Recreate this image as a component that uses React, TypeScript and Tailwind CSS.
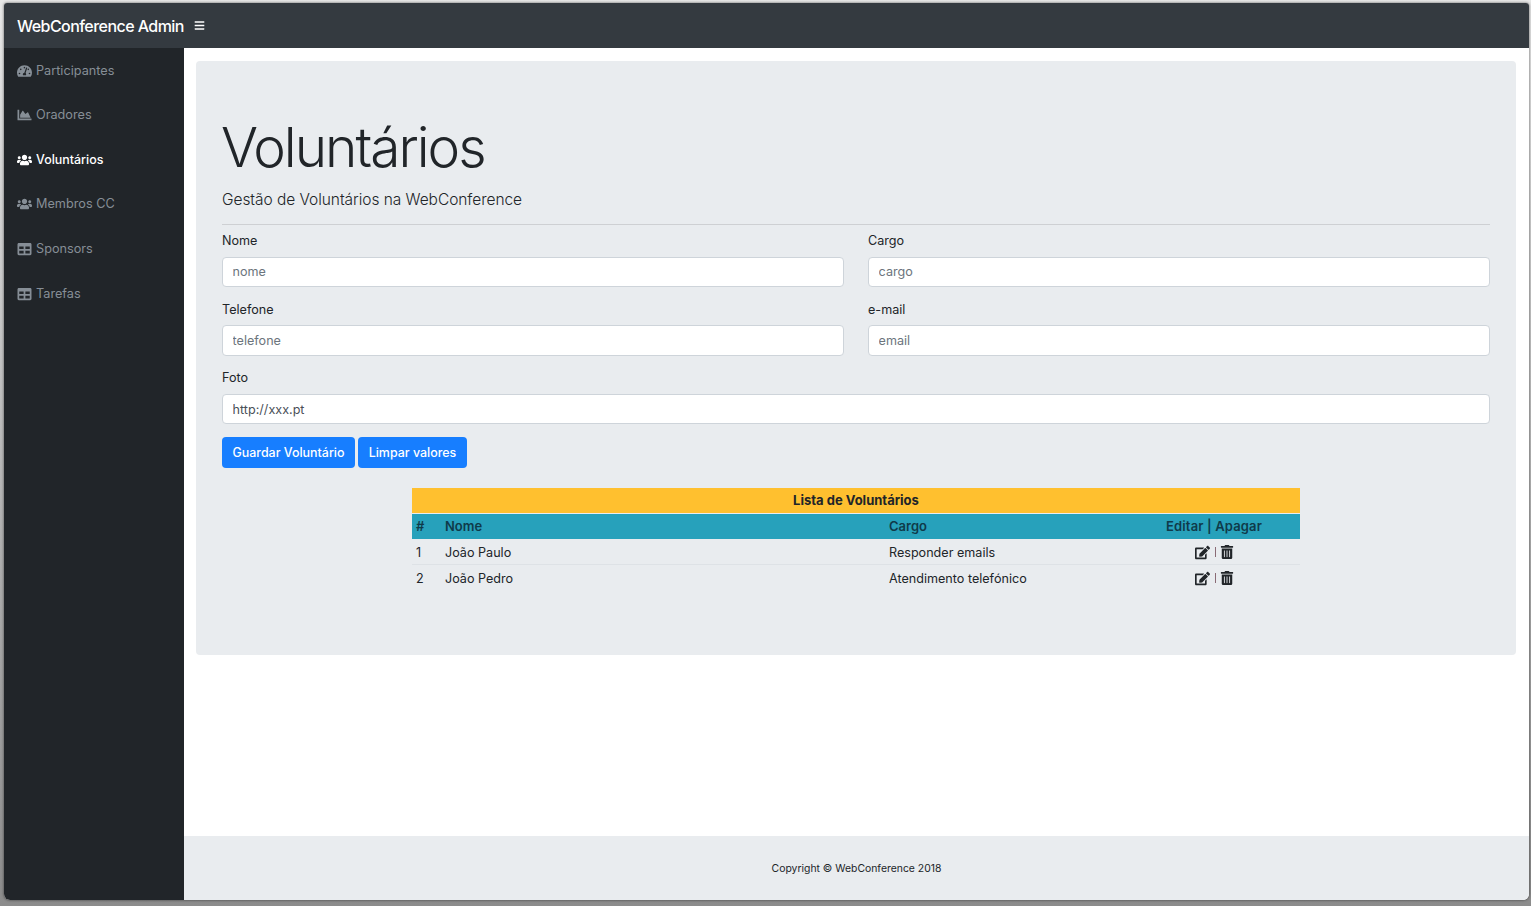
import { FaTachometerAlt, FaChartArea, FaUsers, FaTable, FaEdit, FaTrashAlt, FaBars } from "react-icons/fa";

const nav = [
  { label: "Participantes", Icon: FaTachometerAlt, h: "h-[44px]" },
  { label: "Oradores", Icon: FaChartArea, h: "h-[44px]" },
  { label: "Voluntários", Icon: FaUsers, h: "h-[45px]", active: true },
  { label: "Membros CC", Icon: FaUsers, h: "h-[44px]" },
  { label: "Sponsors", Icon: FaTable, h: "h-[45px]" },
  { label: "Tarefas", Icon: FaTable, h: "h-[45px]" },
];

function Field({ label, placeholder, value }: { label: string; placeholder?: string; value?: string }) {
  return (
    <div className="flex-1 min-w-0">
      <label className="block text-[12.6px] leading-[19px] text-[#212529] mb-[6.6px]">{label}</label>
      <input
        readOnly
        placeholder={placeholder}
        value={value}
        className="block w-full h-[30.6px] rounded-[4px] border border-[#ced4da] bg-white px-[9.6px] text-[12.6px] text-[#495057] placeholder:text-[#6c757d] outline-none"
      />
    </div>
  );
}

function Row({ n, nome, cargo, last }: { n: string; nome: string; cargo: string; last?: boolean }) {
  return (
    <div className={`flex h-[26px] items-center border-b pt-[4px] text-[12.6px] text-[#212529] ${last ? "border-transparent" : "border-[#dee2e6]"}`}>
      <div className="w-[33px] pl-[4px]">{n}</div>
      <div className="w-[444px]">{nome}</div>
      <div className="w-[245px]">{cargo}</div>
      <div className="-mt-[2px] flex flex-1 items-center pl-[61px]">
        <FaEdit className="text-[15px]" />
        <span className="ml-[5px] mr-[4px] h-[10px] w-px bg-[#8a6b75]" />
        <FaTrashAlt className="text-[14px]" />
      </div>
    </div>
  );
}

export default function App() {
  return (
    <div className="h-[906px] w-[1531px] overflow-hidden bg-gradient-to-b from-[#e8e8e8] to-[#8c8c8c] pt-[3px] pl-[4px] pr-[2px] pb-[6px] font-['Inter','Liberation_Sans',sans-serif]">
      <div className="flex h-full flex-col overflow-hidden rounded-t-[3px] rounded-b-[6px] bg-white shadow-[0_0_3px_rgba(0,0,0,0.6)]">
        <header className="flex h-[45px] shrink-0 items-center bg-[#343a40] pl-[13px] text-white">
          <span className="text-[16px] font-medium tracking-[-0.55px]">WebConference Admin</span>
          <FaBars className="ml-[10px] text-[11px]" />
        </header>
        <div className="flex min-h-0 flex-1">
          <aside className="w-[180px] shrink-0 bg-[#212529] pt-[1px]">
            {nav.map(({ label, Icon, h, active }) => (
              <div key={label} className={`flex ${h} items-center pl-[13px] ${active ? "pt-[1px] text-[12.45px] font-medium text-white" : "text-[12.7px] text-[#868e96]"}`}>
                <Icon className="mr-[4px] w-[15px] text-[14px]" />
                {label}
              </div>
            ))}
          </aside>
          <main className="flex min-w-0 flex-1 flex-col">
            <div className="flex-1 pl-[12px] pr-[13px] pt-[13px]">
              <section className="h-[594px] rounded-[4px] bg-[#e9ecef] px-[26px] pt-[53px]">
                <h1 className="-ml-px text-[55px] font-light leading-[67px] tracking-[-2px] text-[#212529]">Voluntários</h1>
                <p className="mt-[7px] text-[15.5px] font-light leading-[24px] tracking-[-0.05px] text-[#212529]">Gestão de Voluntários na WebConference</p>
                <hr className="mt-[12px] mb-[6px] border-[#ced0d3]" />
                <div className="flex flex-col gap-[12.4px]">
                  <div className="flex gap-[24px]">
                    <Field label="Nome" placeholder="nome" />
                    <Field label="Cargo" placeholder="cargo" />
                  </div>
                  <div className="flex gap-[24px]">
                    <Field label="Telefone" placeholder="telefone" />
                    <Field label="e-mail" placeholder="email" />
                  </div>
                  <Field label="Foto" value="http://xxx.pt" />
                </div>
                <div className="mt-[12.6px] flex gap-[3px]">
                  <button className="h-[31px] w-[133px] rounded-[4px] bg-[#177eff] pt-[1px] text-[12.45px] font-medium text-white">Guardar Voluntário</button>
                  <button className="h-[31px] w-[109px] rounded-[4px] bg-[#177eff] pt-[1px] text-[12.45px] font-medium text-white">Limpar valores</button>
                </div>
                <div className="mx-auto mt-[20px] w-[888px]">
                  <div className="flex h-[25px] items-center justify-center bg-[#ffc02f] text-[13px] font-bold text-[#212529]">Lista de Voluntários</div>
                  <div className="mt-px flex h-[25px] items-center bg-[#27a1bb] text-[13px] font-semibold text-[#0f3a4a]">
                    <div className="w-[33px] pl-[4px]">#</div>
                    <div className="w-[444px]">Nome</div>
                    <div className="w-[277px]">Cargo</div>
                    <div className="tracking-[0.15px]">Editar | Apagar</div>
                  </div>
                  <Row n="1" nome="João Paulo" cargo="Responder emails" />
                  <Row n="2" nome="João Pedro" cargo="Atendimento telefónico" last />
                </div>
              </section>
            </div>
            <footer className="flex h-[64px] shrink-0 items-center justify-center bg-[#e9ecef] pt-[1px] text-[10.4px] text-[#212529]">Copyright © WebConference 2018</footer>
          </main>
        </div>
      </div>
    </div>
  );
}
